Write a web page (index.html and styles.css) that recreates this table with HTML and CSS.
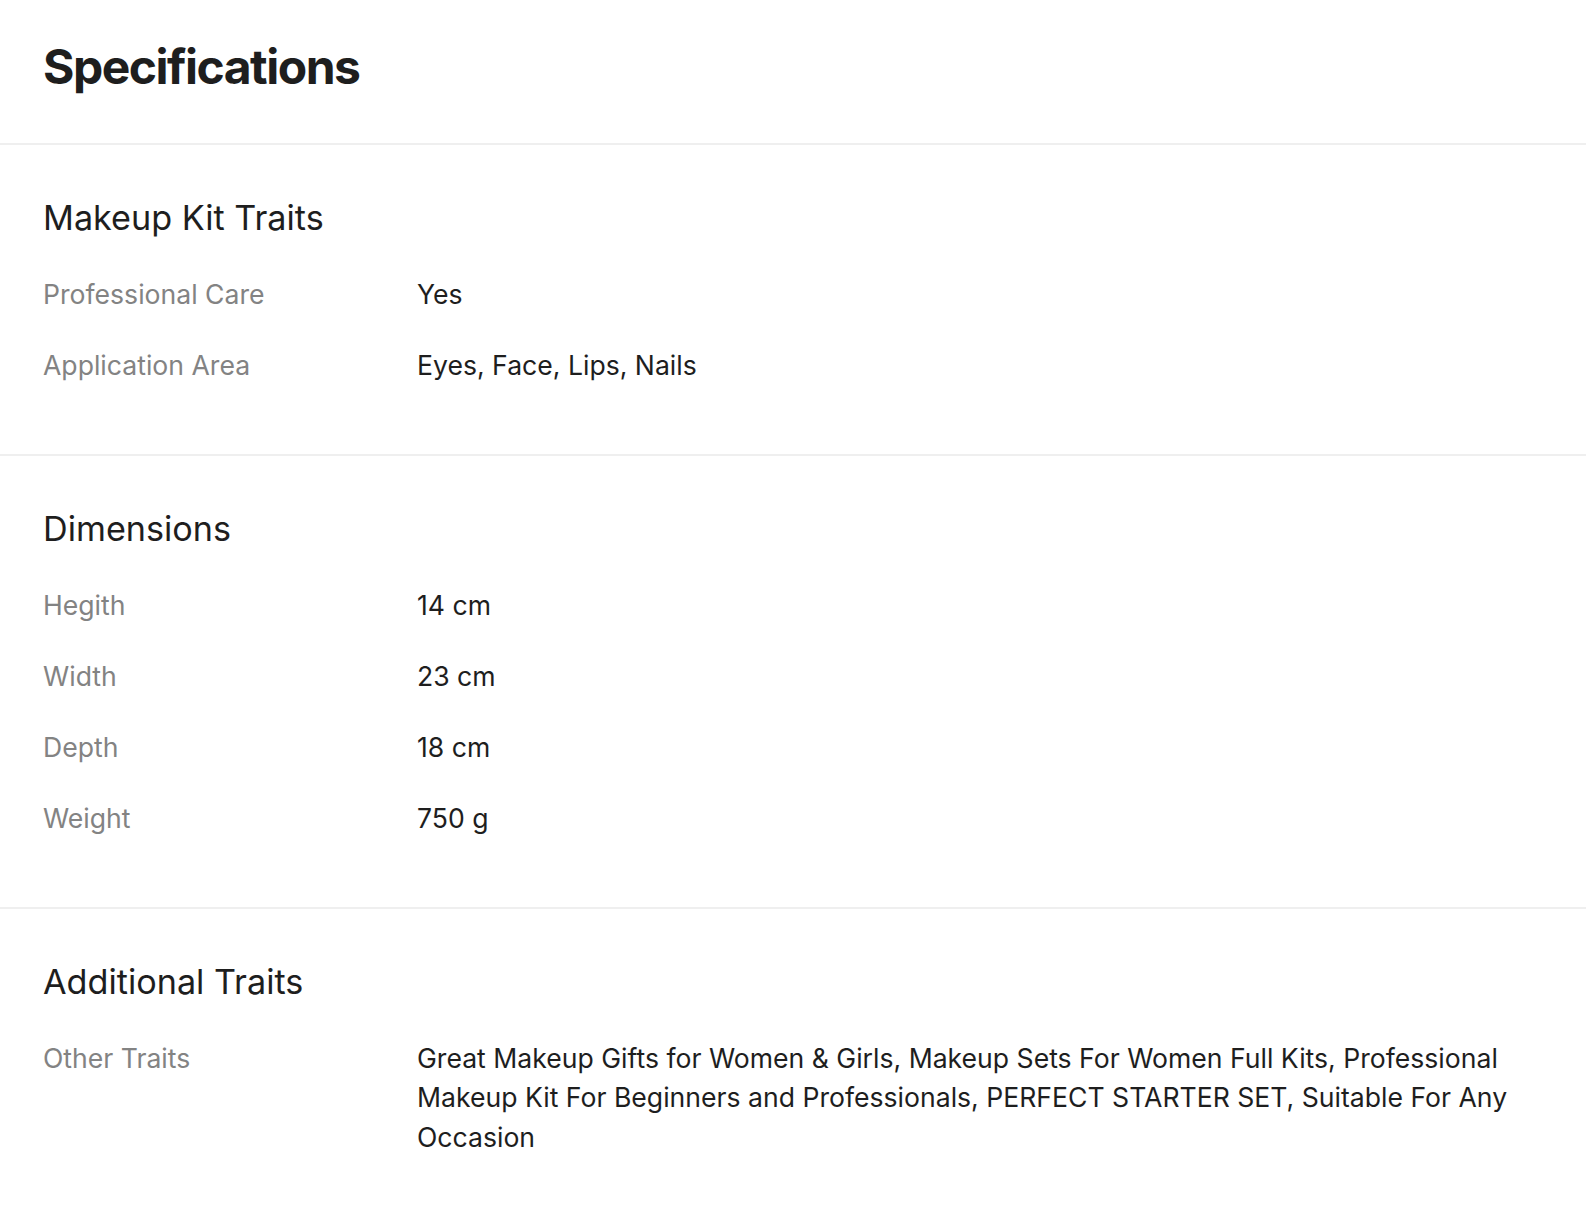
FILE: index.html
```html
<!DOCTYPE html>
<html lang="en">
<head>
<meta charset="utf-8">
<title>Specifications</title>
<link rel="stylesheet" href="styles.css">
</head>
<body>
<main class="specs">
  <header class="specs-header">
    <h1 class="specs-title">Specifications</h1>
  </header>

  <section class="group">
    <h2 class="group-title">Makeup Kit Traits</h2>
    <dl class="rows">
      <div class="row"><dt class="label">Professional Care</dt><dd class="value">Yes</dd></div>
      <div class="row"><dt class="label">Application Area</dt><dd class="value">Eyes, Face, Lips, Nails</dd></div>
    </dl>
  </section>

  <section class="group">
    <h2 class="group-title">Dimensions</h2>
    <dl class="rows">
      <div class="row"><dt class="label">Hegith</dt><dd class="value">14 cm</dd></div>
      <div class="row"><dt class="label">Width</dt><dd class="value">23 cm</dd></div>
      <div class="row"><dt class="label">Depth</dt><dd class="value">18 cm</dd></div>
      <div class="row"><dt class="label">Weight</dt><dd class="value">750 g</dd></div>
    </dl>
  </section>

  <section class="group">
    <h2 class="group-title">Additional Traits</h2>
    <dl class="rows">
      <div class="row"><dt class="label">Other Traits</dt><dd class="value">Great Makeup Gifts for Women &amp; Girls, Makeup Sets For Women Full Kits, Professional Makeup Kit For Beginners and Professionals, PERFECT STARTER SET, Suitable For Any Occasion</dd></div>
    </dl>
  </section>
</main>
</body>
</html>
```
FILE: styles.css
```css
* { box-sizing: border-box; }

html, body {
  margin: 0;
  padding: 0;
  background: #ffffff;
}

body {
  font-family: "Inter", "Noto Sans", "Liberation Sans", sans-serif;
  color: #1e1e1e;
}

.specs {
  display: flex;
  flex-direction: column;
}

.specs-header {
  padding: 38px 43px 47px;
}

.specs-title {
  margin: 0;
  font-size: 48px;
  line-height: 58px;
  font-weight: 700;
  letter-spacing: -1.5px;
  color: #1e1e1e;
}

.group {
  border-top: 2px solid #efefef;
  padding: 52px 43px 68px;
}

.group-title {
  margin: 0 0 37px;
  font-size: 34.2px;
  line-height: 41px;
  font-weight: 400;
  color: #1e1e1e;
}

.rows {
  margin: 0;
  display: flex;
  flex-direction: column;
  gap: 31.7px;
}

.row {
  display: grid;
  grid-template-columns: 374px 1fr;
  font-size: 26.6px;
  line-height: 39.5px;
}

.label {
  margin: 0;
  color: #838383;
}

.value {
  margin: 0;
  color: #1e1e1e;
}
```
